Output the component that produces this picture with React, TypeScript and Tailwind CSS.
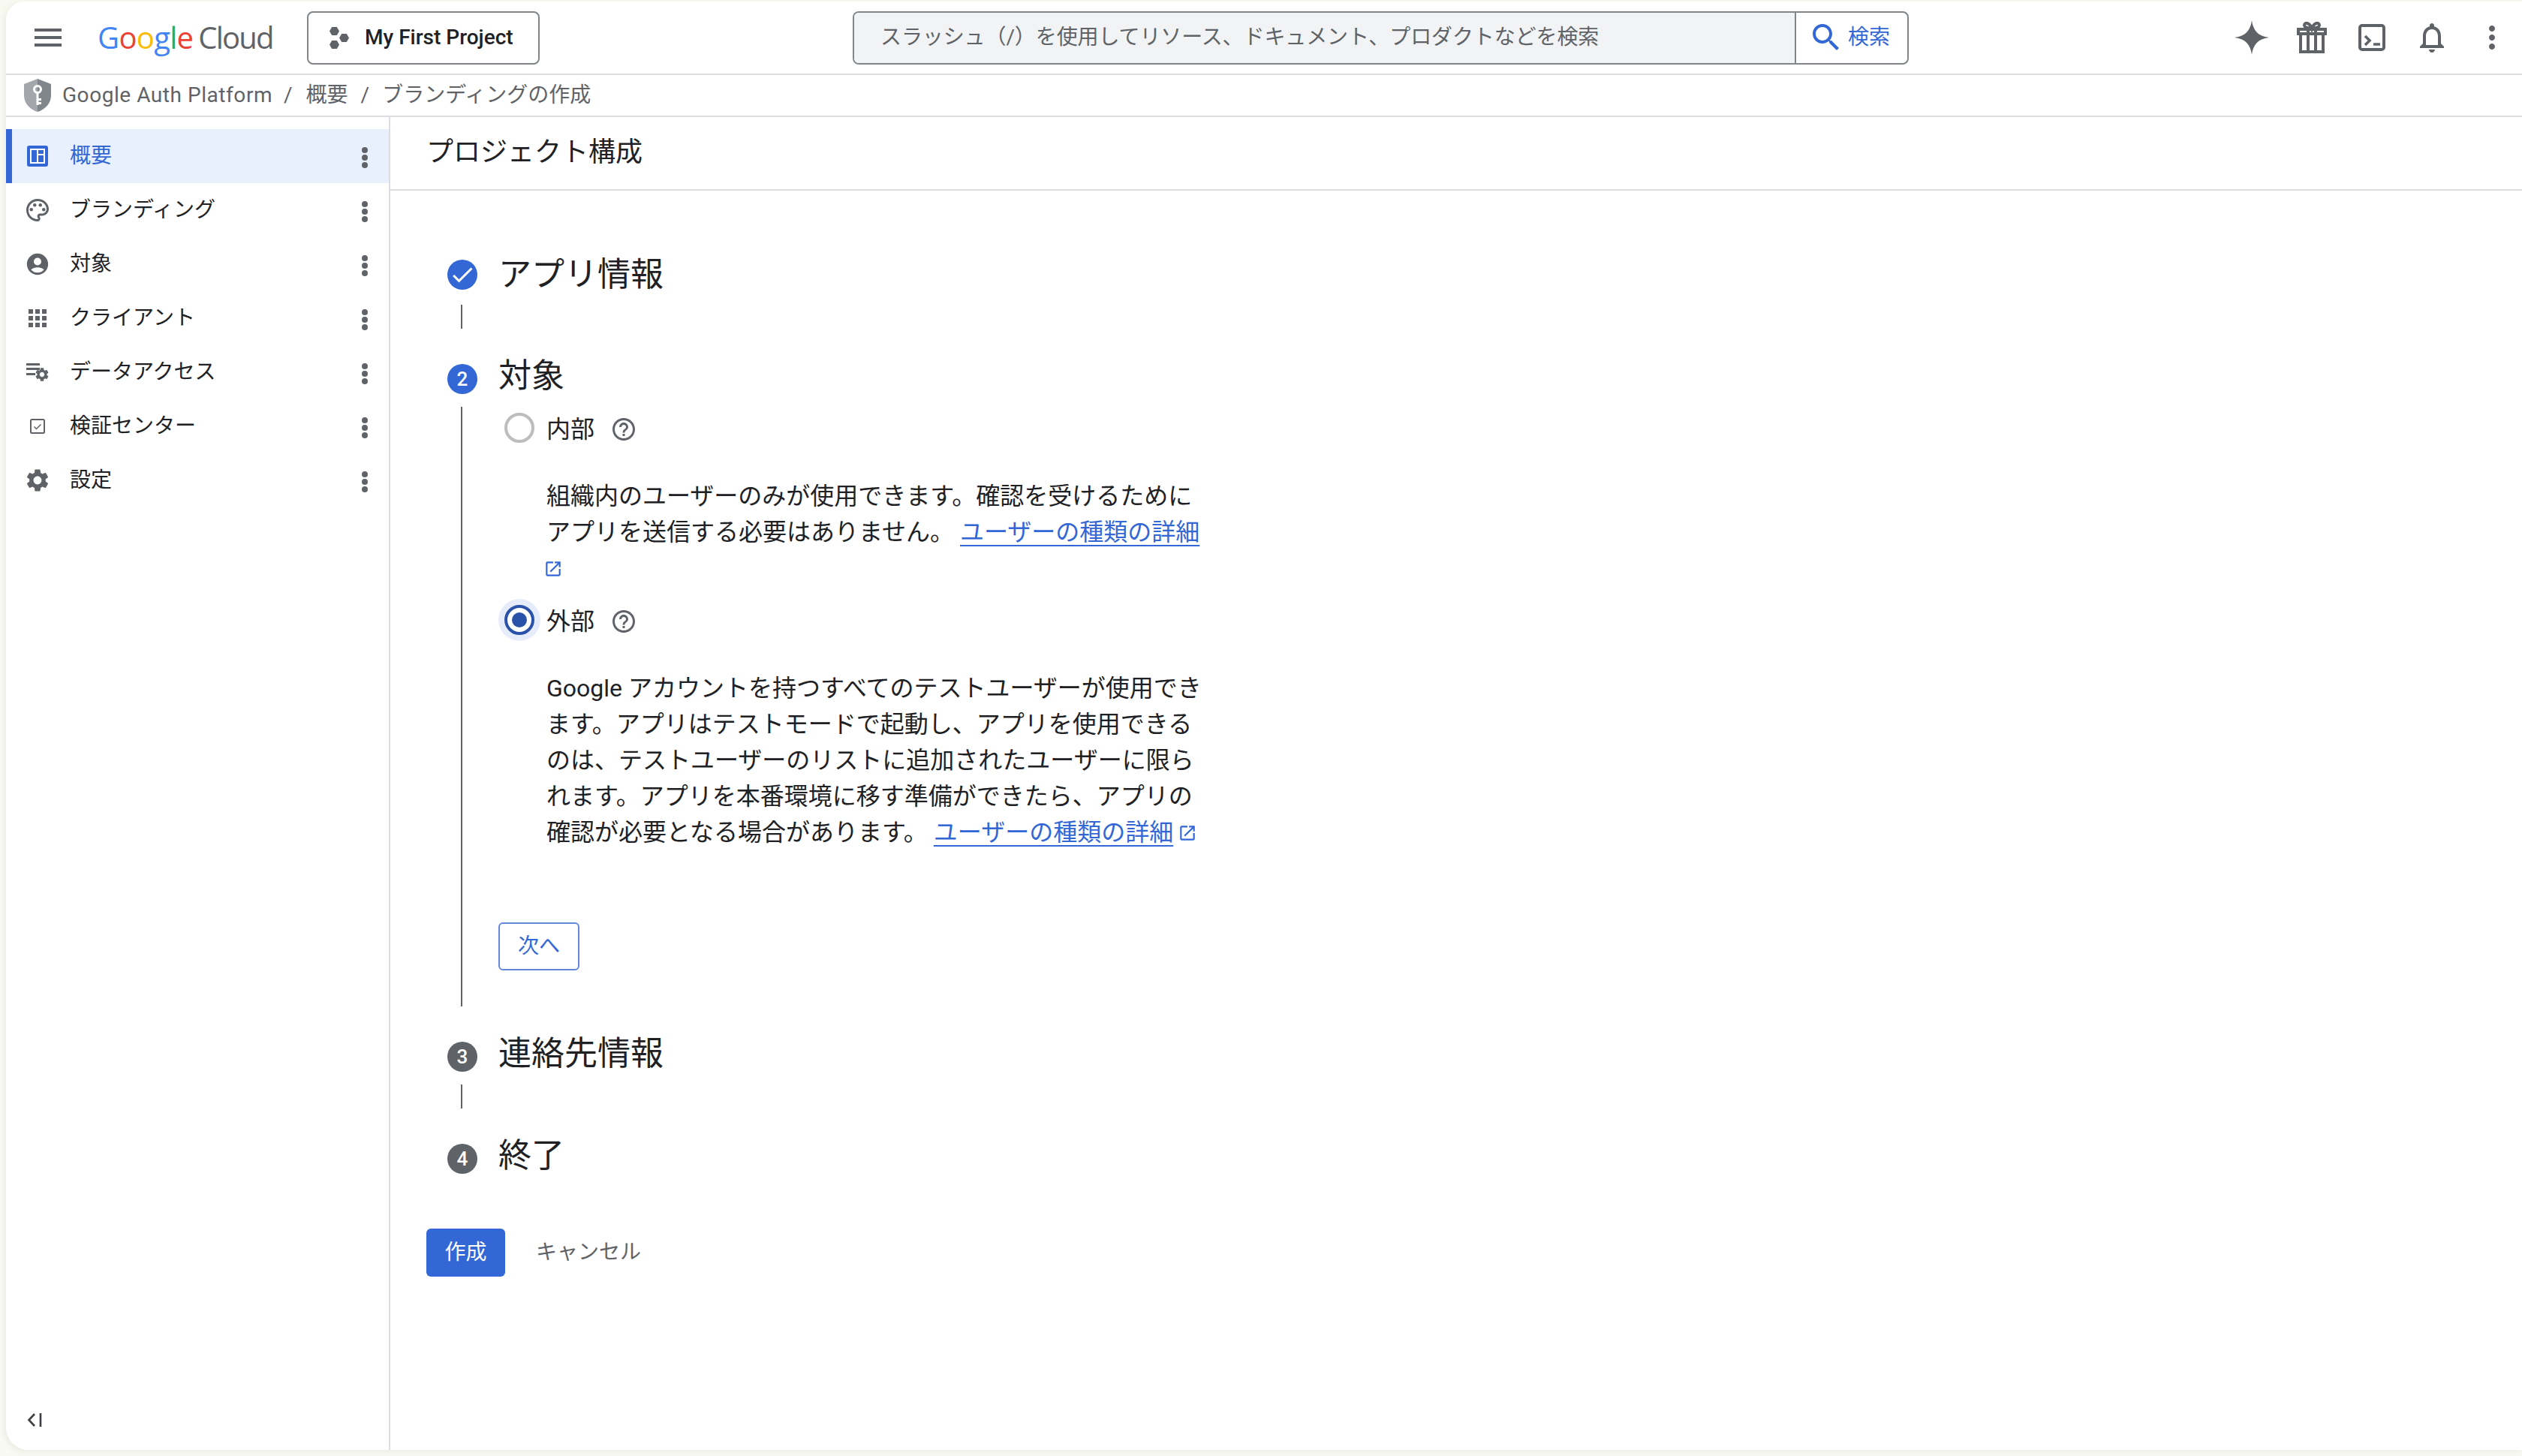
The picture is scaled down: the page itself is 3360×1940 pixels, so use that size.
const P = {
  menu: "M3 18h18v-2H3v2zm0-5h18v-2H3v2zm0-7v2h18V6H3z",
  search:
    "M15.5 14h-.79l-.28-.27C15.41 12.59 16 11.11 16 9.5 16 5.91 13.09 3 9.5 3S3 5.91 3 9.5 5.91 16 9.5 16c1.61 0 3.09-.59 4.23-1.57l.27.28v.79l5 4.99L20.49 19l-4.99-5zm-6 0C7.01 14 5 11.99 5 9.5S7.01 5 9.5 5 14 7.01 14 9.5 11.99 14 9.5 14z",
  bell: "M12 22c1.1 0 2-.9 2-2h-4c0 1.1.9 2 2 2zm6-6v-5c0-3.07-1.64-5.64-4.5-6.32V4c0-.83-.67-1.5-1.5-1.5s-1.5.67-1.5 1.5v.68C7.63 5.36 6 7.92 6 11v5l-2 2v1h16v-1l-2-2zm-2 1H8v-6c0-2.48 1.51-4.5 4-4.5s4 2.02 4 4.5v6z",
  more: "M12 8c1.1 0 2-.9 2-2s-.9-2-2-2-2 .9-2 2 .9 2 2 2zm0 2c-1.1 0-2 .9-2 2s.9 2 2 2 2-.9 2-2-.9-2-2-2zm0 6c-1.1 0-2 .9-2 2s.9 2 2 2 2-.9 2-2-.9-2-2-2z",
  palette:
    "M12 22C6.49 22 2 17.51 2 12S6.49 2 12 2s10 4.04 10 9c0 3.31-2.69 6-6 6h-1.77c-.28 0-.5.22-.5.5 0 .12.05.23.13.33.41.47.64 1.06.64 1.67 0 1.38-1.12 2.5-2.5 2.5zm0-18c-4.41 0-8 3.59-8 8s3.59 8 8 8c.28 0 .5-.22.5-.5 0-.16-.08-.28-.14-.35-.41-.46-.63-1.05-.63-1.65 0-1.38 1.12-2.5 2.5-2.5H16c2.21 0 4-1.79 4-4 0-3.86-3.59-7-8-7z",
  account:
    "M12 2C6.48 2 2 6.48 2 12s4.48 10 10 10 10-4.48 10-10S17.52 2 12 2zm0 4c1.93 0 3.5 1.57 3.5 3.5S13.93 13 12 13s-3.5-1.57-3.5-3.5S10.07 6 12 6zm0 14c-2.03 0-4.43-.82-6.14-2.88C7.55 15.8 9.68 15 12 15s4.45.8 6.14 2.12C16.43 19.18 14.03 20 12 20z",
  apps: "M4 8h4V4H4v4zm6 12h4v-4h-4v4zm-6 0h4v-4H4v4zm0-6h4v-4H4v4zm6 0h4v-4h-4v4zm6-10v4h4V4h-4zm-6 4h4V4h-4v4zm6 6h4v-4h-4v4zm0 6h4v-4h-4v4z",
  settings:
    "M19.14 12.94c.04-.3.06-.61.06-.94 0-.32-.02-.64-.07-.94l2.03-1.58c.18-.14.23-.41.12-.61l-1.92-3.32c-.12-.22-.37-.29-.59-.22l-2.39.96c-.5-.38-1.03-.7-1.62-.94l-.36-2.54c-.04-.24-.24-.41-.48-.41h-3.84c-.24 0-.43.17-.47.41l-.36 2.54c-.59.24-1.13.57-1.62.94l-2.39-.96c-.22-.08-.47 0-.59.22L2.74 8.87c-.12.21-.08.47.12.61l2.03 1.58c-.05.3-.09.63-.09.94s.02.64.07.94l-2.03 1.58c-.18.14-.23.41-.12.61l1.92 3.32c.12.22.37.29.59.22l2.39-.96c.5.38 1.03.7 1.62.94l.36 2.54c.05.24.24.41.48.41h3.84c.24 0 .44-.17.47-.41l.36-2.54c.59-.24 1.13-.56 1.62-.94l2.39.96c.22.08.47 0 .59-.22l1.92-3.32c.12-.22.07-.47-.12-.61l-2.01-1.58zM12 15.6c-1.98 0-3.6-1.62-3.6-3.6s1.62-3.6 3.6-3.6 3.6 1.62 3.6 3.6-1.62 3.6-3.6 3.6z",
  help: "M11 18h2v-2h-2v2zm1-16C6.48 2 2 6.48 2 12s4.48 10 10 10 10-4.48 10-10S17.52 2 12 2zm0 18c-4.41 0-8-3.59-8-8s3.59-8 8-8 8 3.59 8 8-3.59 8-8 8zm0-14c-2.21 0-4 1.79-4 4h2c0-1.1.9-2 2-2s2 .9 2 2c0 2-3 1.75-3 5h2c0-2.25 3-2.5 3-5 0-2.21-1.79-4-4-4z",
  ext: "M19 19H5V5h7V3H5c-1.11 0-2 .9-2 2v14c0 1.1.89 2 2 2h14c1.1 0 2-.9 2-2v-7h-2v7zM14 3v2h3.59l-9.83 9.83 1.41 1.41L19 6.41V10h2V3h-7z",
  check: "M9 16.17L4.83 12l-1.42 1.41L9 19 21 7l-1.41-1.41z",
};

function Mi({ d, className }: { d: string; className: string }) {
  return (
    <svg viewBox="0 0 24 24" className={className}>
      <path d={d} />
    </svg>
  );
}

function Logo() {
  return (
    <div className="ml-[42px] flex w-[233px] shrink-0 items-center text-[40px] leading-none font-['Open_Sans',sans-serif]">
      <span className="tracking-[-0.7px] text-[#4285f4]">G</span>
      <span className="tracking-[-0.7px] text-[#ea4335]">o</span>
      <span className="tracking-[-0.7px] text-[#fbbc05]">o</span>
      <span className="tracking-[-0.7px] text-[#4285f4]">g</span>
      <span className="tracking-[-0.7px] text-[#34a853]">l</span>
      <span className="tracking-[-0.7px] text-[#ea4335]">e</span>
      <span className="ml-[7px] tracking-[-1.8px] text-[#5f6368]">Cloud</span>
    </div>
  );
}

function Hexes() {
  return (
    <svg viewBox="0 0 26 29" className="h-[29px] w-[26px] fill-[#5f6368]">
      <polygon points="0,5.5 3.2,0 9.8,0 13,5.5 9.8,11 3.2,11" />
      <polygon points="0,23.5 3.2,18 9.8,18 13,23.5 9.8,29 3.2,29" />
      <polygon points="13,14.5 16.2,9 22.8,9 26,14.5 22.8,20 16.2,20" />
    </svg>
  );
}

function Header() {
  return (
    <header className="flex h-[98px] shrink-0 items-center border-b-2 border-[#dcdce2]">
      <Mi d={P.menu} className="ml-[32px] h-[48px] w-[48px] shrink-0 fill-[#5f6368]" />
      <Logo />
      <button className="ml-[46px] flex h-[71px] w-[310px] shrink-0 items-center rounded-[8px] border-2 border-[#80868b] pl-[28px] text-[28px] font-medium text-[#202124]">
        <Hexes />
        <span className="ml-[21px]">My First Project</span>
      </button>
      <div className="ml-[417px] flex h-[71px] w-[1407px] shrink-0 rounded-[8px] border-2 border-[#80868b]">
        <div className="flex flex-1 items-center rounded-l-[6px] bg-[#f1f3f4] pl-[35px] text-[28px] tracking-[-0.1px] text-[#5f6368]">
          スラッシュ（/）を使用してリソース、ドキュメント、プロダクトなどを検索
        </div>
        <div className="flex w-[150px] shrink-0 items-center border-l-2 border-[#80868b] pl-[16px] text-[28px] text-[#3367d6]">
          <Mi d={P.search} className="h-[48px] w-[48px] shrink-0 fill-[#3367d6]" />
          <span className="ml-[5px]">検索</span>
        </div>
      </div>
      <div className="ml-auto flex shrink-0 items-center">
        <div className="flex h-[48px] w-[80px] items-center justify-center">
          <svg viewBox="0 0 46 46" className="h-[46px] w-[46px] fill-[#5f6368]">
            <path d="M23 0C24.6 13 31 21.4 46 23 31 24.6 24.6 33 23 46 21.4 33 15 24.6 0 23 15 21.4 21.4 13 23 0Z" />
          </svg>
        </div>
        <div className="flex h-[48px] w-[80px] items-center justify-center">
          <svg viewBox="0 0 40 42" className="h-[42px] w-[40px] fill-none stroke-[#5f6368] stroke-[4px]">
            <path d="M2 10H38V16H2Z M5 16V40H35V16 M15 10V40 M25 10V40" />
            <path d="M20 9C14 9 10 7 10 4.5 10 2.5 12 1.5 14 2 17 3 19 6 20 9 21 6 23 3 26 2 28 1.5 30 2.5 30 4.5 30 7 26 9 20 9Z" />
          </svg>
        </div>
        <div className="flex h-[48px] w-[80px] items-center justify-center">
          <svg viewBox="0 0 36 36" className="h-[36px] w-[36px] fill-none stroke-[#5f6368]">
            <rect x="2" y="2" width="32" height="32" rx="3" strokeWidth="4" />
            <path d="M9 16L15 22 9 28" strokeWidth="3.6" />
            <path d="M20 27H29" strokeWidth="3.6" />
          </svg>
        </div>
        <div className="flex h-[48px] w-[80px] items-center justify-center">
          <Mi d={P.bell} className="h-[48px] w-[48px] fill-[#5f6368]" />
        </div>
        <div className="flex h-[48px] w-[80px] items-center justify-center">
          <Mi d={P.more} className="h-[48px] w-[48px] fill-[#5f6368]" />
        </div>
      </div>
    </header>
  );
}

function Shield() {
  return (
    <svg viewBox="0 0 36 44" className="h-[44px] w-[36px] shrink-0">
      <path d="M18 0L0 7V22C0 33 8 41 18 44V0Z" fill="#a3a7ab" />
      <path d="M18 0L36 7V22C36 33 28 41 18 44V0Z" fill="#80868b" />
      <circle cx="18" cy="14" r="4.5" fill="none" stroke="#fff" strokeWidth="3" />
      <path d="M16.5 18H19.5V35H16.5Z M19.5 26H23V29H19.5Z M19.5 31H23V34H19.5Z" fill="#fff" />
    </svg>
  );
}

function Breadcrumb() {
  return (
    <div className="flex h-[56px] shrink-0 items-center border-b-2 border-[#dcdce2] pl-[24px] text-[28px] text-[#5f6368]">
      <Shield />
      <span className="ml-[15px] tracking-[0.55px]">Google Auth Platform</span>
      <span className="ml-[15px]">/</span>
      <span className="ml-[18px]">概要</span>
      <span className="ml-[17px]">/</span>
      <span className="ml-[17px]">ブランディングの作成</span>
    </div>
  );
}

function Dots() {
  return (
    <svg viewBox="0 0 8 28" className="h-[28px] w-[8px] shrink-0 fill-[#5f6368]">
      <circle cx="4" cy="4" r="4" />
      <circle cx="4" cy="14" r="4" />
      <circle cx="4" cy="24" r="4" />
    </svg>
  );
}

function DataIcon() {
  return (
    <svg viewBox="0 0 30 24" className="h-[24px] w-[30px] fill-[#5f6368]">
      <rect x="0" y="0" width="18" height="3" />
      <rect x="0" y="6" width="18" height="3" />
      <rect x="0" y="13" width="12" height="3" />
      <svg x="12" y="6" width="18" height="18" viewBox="2 2 20 20">
        <path d={P.settings} />
      </svg>
    </svg>
  );
}

const nav: { label: string; icon: React.ReactNode }[] = [
  {
    label: "概要",
    icon: (
      <svg viewBox="0 0 28 28" className="h-[28px] w-[28px]">
        <rect width="28" height="28" rx="3" fill="#3367d6" />
        <path d="M4 4H24V24H4Z" fill="#fff" />
        <path d="M6 6H13V22H6Z M15 6H22V11H15Z M15 13H22V22H15Z" fill="#3367d6" />
      </svg>
    ),
  },
  {
    label: "ブランディング",
    icon: (
      <svg viewBox="0 0 24 24" className="h-[36px] w-[36px] fill-[#5f6368]">
        <path d={P.palette} />
        <circle cx="6.5" cy="11.5" r="1.5" />
        <circle cx="9.5" cy="7.5" r="1.5" />
        <circle cx="14.5" cy="7.5" r="1.5" />
        <circle cx="17.5" cy="11.5" r="1.5" />
      </svg>
    ),
  },
  { label: "対象", icon: <Mi d={P.account} className="h-[34px] w-[34px] fill-[#5f6368]" /> },
  { label: "クライアント", icon: <Mi d={P.apps} className="h-[36px] w-[36px] fill-[#5f6368]" /> },
  { label: "データアクセス", icon: <DataIcon /> },
  {
    label: "検証センター",
    icon: (
      <svg viewBox="0 0 20 20" className="h-[20px] w-[20px] fill-none stroke-[#5f6368]">
        <rect x="1" y="1" width="18" height="18" rx="1.5" strokeWidth="2" />
        <path d="M5.5 10.5L8.5 13.5 14.5 7.5" strokeWidth="1.5" />
      </svg>
    ),
  },
  { label: "設定", icon: <Mi d={P.settings} className="h-[36px] w-[36px] fill-[#5f6368]" /> },
];

function Sidebar() {
  return (
    <aside className="flex w-[512px] shrink-0 flex-col border-r-2 border-[#dcdce2] pt-[16px]">
      {nav.map((n, i) => (
        <div
          key={n.label}
          className={
            i === 0
              ? "flex h-[72px] items-center border-l-[8px] border-[#3367d6] bg-[#e8f0fe] text-[28px] text-[#3367d6]"
              : "flex h-[72px] items-center border-l-[8px] border-transparent text-[28px] text-[#202124]"
          }
        >
          <div className="flex w-[68px] shrink-0 items-center justify-center">{n.icon}</div>
          <span className="ml-[9px]">{n.label}</span>
          <div className="ml-auto mr-[28px] translate-y-[2px]">
            <Dots />
          </div>
        </div>
      ))}
      <div className="mt-auto pb-[30px] pl-[28px]">
        <svg viewBox="0 0 20 20" className="h-[20px] w-[20px] fill-none stroke-[#3c4043] stroke-[2.6px]">
          <path d="M10 2L2.5 10 10 18" />
          <path d="M18 1V19" />
        </svg>
      </div>
    </aside>
  );
}

function StepRow({ n, title, color, check }: { n: string; title: string; color: string; check?: boolean }) {
  return (
    <div className="flex h-[40px] items-center">
      <div
        className={
          color === "blue"
            ? "flex h-[40px] w-[40px] shrink-0 items-center justify-center rounded-full bg-[#3367d6] text-[26px] font-medium text-white"
            : "flex h-[40px] w-[40px] shrink-0 items-center justify-center rounded-full bg-[#5f6368] text-[26px] font-medium text-white"
        }
      >
        {check ? <Mi d={P.check} className="h-[36px] w-[36px] fill-white" /> : n}
      </div>
      <div className={check ? "ml-[28px] text-[44px] leading-[56px] text-[#202124]" : "ml-[28px] -translate-y-[4px] text-[44px] leading-[56px] text-[#202124]"}>
        {title}
      </div>
    </div>
  );
}

function Help() {
  return <Mi d={P.help} className="ml-[21px] mt-[4px] h-[36px] w-[36px] shrink-0 fill-[#5f6368]" />;
}

const LINK = "text-[#3367d6] underline decoration-[#3367d6] decoration-2 underline-offset-[6px]";

function Stepper() {
  return (
    <div className="ml-[28px] mt-[92px]">
      <StepRow n="1" title="アプリ情報" color="blue" check />
      <div className="ml-[18px] mt-[20px] h-[32px] w-[2px] bg-[#5f6368]" />
      <div className="mt-[47px]">
        <StepRow n="2" title="対象" color="blue" />
      </div>
      <div className="mt-[17px] flex">
        <div className="ml-[18px] w-[2px] shrink-0 bg-[#5f6368]" />
        <div className="ml-[56px] pb-[48px] pt-[8px]">
          <div className="flex items-center">
            <div className="h-[40px] w-[40px] shrink-0 rounded-full border-4 border-[#bdbdbd]" />
            <span className="ml-[16px] translate-y-[2px] text-[32px] leading-[40px] text-[#202124]">内部</span>
            <Help />
          </div>
          <div className="ml-[56px] mt-[47px] w-[880px] text-[32px] leading-[48px] text-[#202124]">
            組織内のユーザーのみが使用できます。確認を受けるために
            <br />
            アプリを送信する必要はありません。 <a className={LINK}>ユーザーの種類の詳細</a>
            <br />
            <Mi d={P.ext} className="-ml-[4px] inline-block h-[26px] w-[26px] -translate-y-[2px] fill-[#3367d6]" />
          </div>
          <div className="mt-[25px] flex items-center">
            <div className="flex h-[40px] w-[40px] shrink-0 items-center justify-center rounded-full border-4 border-[#2a52a8] shadow-[0_0_0_8px_#e6ecf9]">
              <div className="h-[20px] w-[20px] rounded-full bg-[#2a52a8]" />
            </div>
            <span className="ml-[16px] translate-y-[2px] text-[32px] leading-[40px] text-[#202124]">外部</span>
            <Help />
          </div>
          <div className="ml-[56px] mt-[47px] w-[880px] text-[32px] leading-[48px] text-[#202124]">
            Google アカウントを持つすべてのテストユーザーが使用でき
            <br />
            ます。アプリはテストモードで起動し、アプリを使用できる
            <br />
            のは、テストユーザーのリストに追加されたユーザーに限ら
            <br />
            れます。アプリを本番環境に移す準備ができたら、アプリの
            <br />
            確認が必要となる場合があります。 <a className={LINK}>ユーザーの種類の詳細</a>{" "}
            <Mi d={P.ext} className="-ml-[2px] inline-block h-[26px] w-[26px] -translate-y-[2px] fill-[#3367d6]" />
          </div>
          <button className="-ml-[8px] mt-[96px] flex h-[64px] w-[108px] items-center justify-center rounded-[6px] border-2 border-[#6487dc] text-[28px] text-[#3367d6]">
            次へ
          </button>
        </div>
      </div>
      <div className="mt-[47px]">
        <StepRow n="3" title="連絡先情報" color="gray" />
      </div>
      <div className="ml-[18px] mt-[17px] h-[32px] w-[2px] bg-[#5f6368]" />
      <div className="mt-[47px]">
        <StepRow n="4" title="終了" color="gray" />
      </div>
    </div>
  );
}

export default function App() {
  return (
    <div className="h-[1940px] w-[3360px] overflow-hidden bg-[#f8f9f0] pb-[8px] pl-[8px] pt-[2px] font-['Roboto','Noto_Sans_CJK_JP',sans-serif]">
      <div className="flex h-full flex-col overflow-hidden rounded-bl-[30px] rounded-tl-[24px] bg-white shadow-[-2px_2px_8px_rgba(0,0,0,0.06)]">
        <Header />
        <Breadcrumb />
        <div className="flex min-h-0 flex-1">
          <Sidebar />
          <main className="min-w-0 flex-1">
            <div className="flex h-[98px] items-center border-b-2 border-[#dcdce2] pb-[2px] pl-[48px] text-[36px] text-[#202124]">
              プロジェクト構成
            </div>
            <div className="pl-[48px]">
              <Stepper />
              <div className="mt-[73px] flex items-center">
                <button className="h-[64px] w-[105px] rounded-[6px] bg-[#3367d6] text-[28px] text-white">作成</button>
                <span className="ml-[41px] text-[28px] text-[#5f6368]">キャンセル</span>
              </div>
            </div>
          </main>
        </div>
      </div>
    </div>
  );
}
